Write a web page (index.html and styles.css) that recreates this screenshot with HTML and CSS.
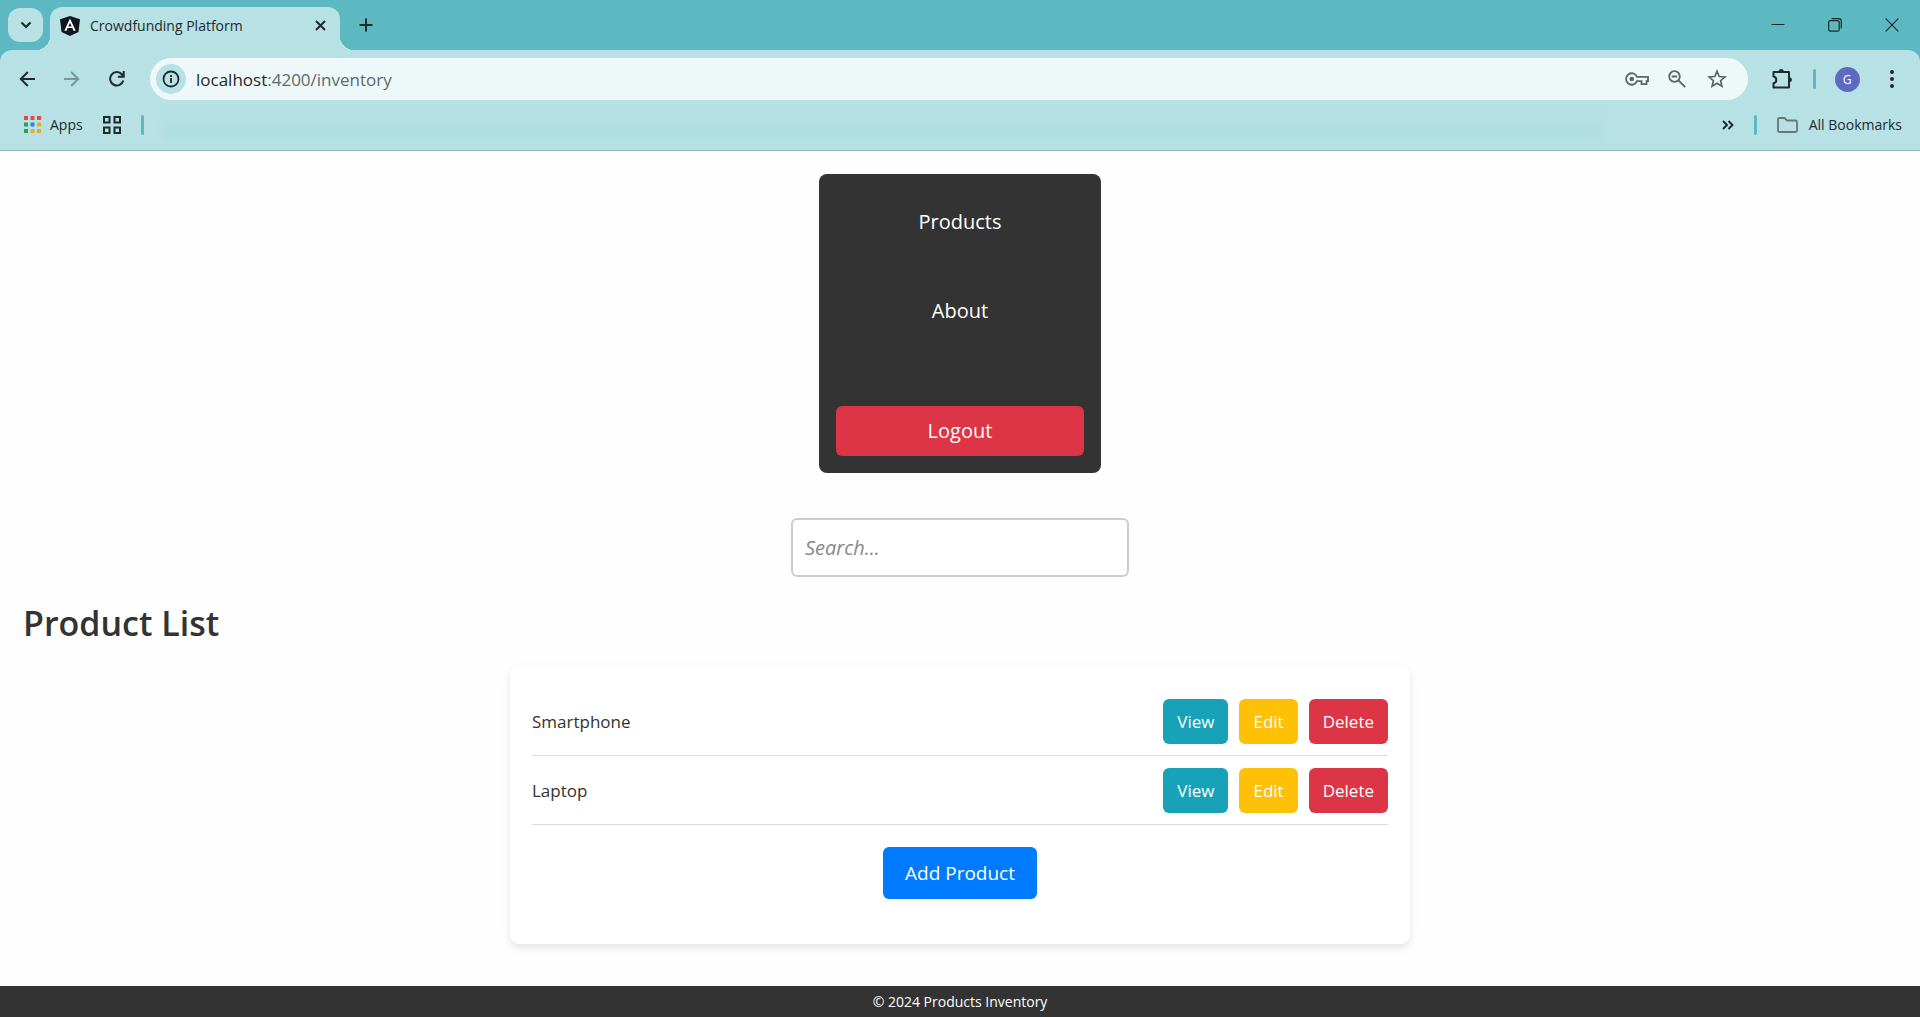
FILE: index.html
```html
<!DOCTYPE html>
<html lang="en">
<head>
<meta charset="utf-8">
<title>Crowdfunding Platform</title>
<link rel="stylesheet" href="styles.css">
</head>
<body>
<div class="browser">
  <div class="tab-strip">
    <button class="tab-search" aria-label="Search tabs"><svg width="12" height="8" viewBox="0 0 12 8"><path d="M1.5 1.5 6 6l4.500-4.500" fill="none" stroke="currentColor" stroke-width="2.200"/></svg></button>
    <div class="tab">
      <svg width="20" height="20" viewBox="0 0 20 20"><path d="M10 0 20 3.300 18.500 16 10 20 1.500 16 0 3.300z" fill="#10151f"/><path d="M10 2.500 4.300 14.800h2.200l1.100-2.700h4.800l1.100 2.700h2.200zm0 4.200 1.700 3.700H8.300z" fill="#fff"/></svg>
      <span class="tab-title">Crowdfunding Platform</span>
      <button class="tab-close" aria-label="Close tab"><svg width="11" height="11" viewBox="0 0 11 11"><path d="m1 1 9 9m0-9-9 9" stroke="currentColor" stroke-width="2"/></svg></button>
    </div>
    <button class="new-tab" aria-label="New tab"><svg width="14" height="14" viewBox="0 0 14 14"><path d="M7 .5v13M.5 7h13" stroke="currentColor" stroke-width="2"/></svg></button>
    <div class="window-controls">
      <button aria-label="Minimize"><svg width="14" height="14" viewBox="0 0 14 14"><path d="M.5 6.500h13" stroke="currentColor"/></svg></button>
      <button aria-label="Restore"><svg width="14" height="14" viewBox="0 0 14 14" fill="none" stroke="currentColor" stroke-width="1.200"><rect x=".7" y="2.700" width="10.500" height="10.500" rx="1.500"/><path d="M3.500.7h7.200a2.600 2.600 0 0 1 2.600 2.600v7.200"/></svg></button>
      <button aria-label="Close"><svg width="14" height="14" viewBox="0 0 14 14"><path d="m.7.7 12.600 12.600m0-12.600L.7 13.300" stroke="currentColor" stroke-width="1.200"/></svg></button>
    </div>
  </div>
  <div class="toolbar">
    <div class="nav-buttons">
      <button class="icon-button" aria-label="Back"><svg width="16" height="16" viewBox="0 0 16 16"><path d="M16 8H2m6.800-7L1.800 8l7 7" fill="none" stroke="currentColor" stroke-width="2"/></svg></button>
      <button class="icon-button muted" aria-label="Forward"><svg width="16" height="16" viewBox="0 0 16 16"><path d="M0 8h14M7.200 1l7 7-7 7" fill="none" stroke="currentColor" stroke-width="2"/></svg></button>
      <button class="icon-button" aria-label="Reload"><svg width="16" height="16" viewBox="0 0 16 16"><path d="M14.300 9.500A6.700 6.700 0 1 1 13 3.500l1.500 1.700M14.700 0v5.800H8.900" fill="none" stroke="currentColor" stroke-width="2"/></svg></button>
    </div>
    <div class="omnibox">
      <button class="site-info" aria-label="Site information"><svg width="18" height="18" viewBox="0 0 18 18"><circle cx="9" cy="9" r="7.500" fill="none" stroke="currentColor" stroke-width="1.800"/><path d="M9 8v5M9 5v2" stroke="currentColor" stroke-width="1.800"/></svg></button>
      <span class="url"><span class="host">localhost</span>:4200/inventory</span>
      <div class="omnibox-actions">
        <button aria-label="Passwords"><svg width="24" height="16" viewBox="0 0 24 16" fill="none" stroke="currentColor" stroke-width="1.800"><path d="M12 5.800A5.700 5.700 0 1 0 12 10.200h4.500v3h5v-3H23V5.800z"/><circle cx="6.800" cy="8" r="2.300" fill="currentColor" stroke="none"/></svg></button>
        <button aria-label="Zoom"><svg width="18" height="18" viewBox="0 0 18 18" fill="none" stroke="currentColor" stroke-width="1.800"><circle cx="6.500" cy="6.500" r="5.300"/><path d="m10.400 10.400 6.800 6.800M3.800 6.500h5.400"/></svg></button>
        <button aria-label="Bookmark this tab"><svg width="20" height="20" viewBox="0 0 20 20"><path d="m10 2.300 2.200 5.200 5.700.5-4.300 3.700 1.300 5.600L10 14.300l-4.900 3 1.300-5.600L2.100 8l5.700-.5z" fill="none" stroke="currentColor" stroke-width="1.700"/></svg></button>
      </div>
    </div>
    <div class="toolbar-actions">
      <button class="icon-button" aria-label="Extensions"><svg width="22" height="22" viewBox="0 0 22 22"><path d="M2.500 4h15.500v15.500H2.500v-4.300c3.700-.6 3.700-6 0-6.600z" fill="none" stroke="currentColor" stroke-width="2" stroke-linejoin="round"/><path d="M7.700 3.500a2.500 2.500 0 0 1 5 0M18.500 9.200a2.500 2.500 0 0 1 0 5" fill="currentColor"/></svg></button>
      <span class="divider"></span>
      <button class="icon-button" aria-label="Profile"><span class="avatar">G</span></button>
      <button class="icon-button menu-button" aria-label="Menu"><svg width="4" height="18" viewBox="0 0 4 18" fill="currentColor"><circle cx="2" cy="2" r="2"/><circle cx="2" cy="9" r="2"/><circle cx="2" cy="16" r="2"/></svg></button>
    </div>
  </div>
  <div class="bookmarks-bar">
    <button class="bookmark"><svg width="17" height="17" viewBox="0 0 17 17"><path d="M0 0h4v4H0zM6.500 0h4v4h-4zM13 0h4v4h-4z" fill="#e34b42"/><path d="M0 6.500h4v4H0zM0 13h4v4H0z" fill="#2e9e56"/><path d="M6.500 6.500h4v4h-4z" fill="#2186e8"/><path d="M13 6.500h4v4h-4zM6.500 13h4v4h-4zM13 13h4v4h-4z" fill="#e7ab2b"/></svg>Apps</button>
    <button class="bookmark" aria-label="Tab groups"><svg width="18" height="18" viewBox="0 0 18 18" fill="none" stroke="currentColor" stroke-width="2"><path d="M1 1h5.500v5.500H1zM11.500 1H17v5.500h-5.500zM1 11.500h5.500V17H1zM11.500 11.500H17V17h-5.500z"/></svg></button>
    <span class="divider"></span>
    <div class="bookmark-haze"></div>
    <button class="bookmark" aria-label="More bookmarks"><svg width="12" height="10" viewBox="0 0 12 10"><path d="m1 1 4 4-4 4m5.500-8 4 4-4 4" fill="none" stroke="currentColor" stroke-width="1.900"/></svg></button>
    <span class="divider"></span>
    <button class="bookmark"><svg class="folder" width="21" height="16" viewBox="0 0 21 16"><path d="M1 2.500Q1 1 2.500 1h5l2.500 2.500h8.500Q20 3.500 20 5v8.500q0 1.500-1.500 1.500h-16Q1 15 1 13.500z" fill="none" stroke="currentColor" stroke-width="1.800"/></svg>All Bookmarks</button>
  </div>
</div>
<main>
  <nav class="menu">
    <a href="#products">Products</a>
    <a href="#about">About</a>
    <button class="logout">Logout</button>
  </nav>
  <input class="search" type="text" placeholder="Search..." aria-label="Search products">
  <h2>Product List</h2>
  <section class="card">
    <ul class="products">
      <li><span class="name">Smartphone</span><button class="view">View</button><button class="edit">Edit</button><button class="delete">Delete</button></li>
      <li><span class="name">Laptop</span><button class="view">View</button><button class="edit">Edit</button><button class="delete">Delete</button></li>
    </ul>
    <button class="add">Add Product</button>
  </section>
</main>
<footer>© 2024 Products Inventory</footer>
</body>
</html>
```
FILE: styles.css
```css
* {
  box-sizing: border-box;
}

body {
  margin: 0;
  min-height: 100vh;
  display: flex;
  flex-direction: column;
  background: #fefefe;
  color: #333;
  font-family: "Open Sans", "Noto Sans", sans-serif;
  font-size: 17px;
}

button {
  padding: 0;
  border: 0;
  background: none;
  color: inherit;
  font: inherit;
  cursor: pointer;
}

svg {
  display: block;
  flex: none;
}

/* Browser frame */
.browser {
  background: #5cb8c1;
  color: #1f2a2c;
  font-size: 14px;
}

.browser button {
  display: flex;
  align-items: center;
  justify-content: center;
}

.tab-strip {
  display: flex;
  align-items: center;
  height: 50px;
  padding-left: 8px;
}

.tab-search {
  width: 35px;
  height: 34px;
  border-radius: 12px;
  background: #b7e1e4;
}

.tab {
  position: relative;
  display: flex;
  align-items: center;
  align-self: flex-end;
  gap: 10px;
  width: 290px;
  height: 43px;
  margin-left: 7px;
  padding: 0 14px 6px 10px;
  border-radius: 12px 12px 0 0;
  background: #b7e1e4;
}

.tab::before,
.tab::after {
  content: "";
  position: absolute;
  bottom: 0;
  width: 14px;
  height: 14px;
}

.tab::before {
  right: 100%;
  background: radial-gradient(circle at 0 0, transparent 14px, #b7e1e4 14px);
}

.tab::after {
  left: 100%;
  background: radial-gradient(circle at 100% 0, transparent 14px, #b7e1e4 14px);
}

.tab-title {
  flex: 1;
}

.new-tab {
  width: 34px;
  height: 34px;
  margin-left: 9px;
}

.window-controls {
  display: flex;
  margin-left: auto;
}

.window-controls button {
  width: 57px;
  height: 50px;
}

.toolbar {
  display: flex;
  align-items: center;
  height: 58px;
  padding: 0 11px 0 10px;
  border-radius: 12px 12px 0 0;
  background: #b7e1e4;
}

.nav-buttons {
  display: flex;
  gap: 11px;
}

.icon-button {
  width: 34px;
  height: 34px;
}

.muted {
  opacity: 0.4;
}

.omnibox {
  display: flex;
  align-items: center;
  flex: 1;
  gap: 10px;
  height: 42px;
  margin: 0 17px 0 16px;
  padding: 0 11px 0 6px;
  border-radius: 21px;
  background: #eef8f9;
}

.site-info {
  width: 30px;
  height: 30px;
  border-radius: 50%;
  background: #b7e1e4;
}

.url {
  flex: 1;
  color: #60696b;
  font-size: 17px;
}

.host {
  color: #1f2a2c;
}

.omnibox-actions {
  display: flex;
  color: #5b6567;
}

.omnibox-actions button {
  width: 40px;
  height: 34px;
}

.toolbar-actions {
  display: flex;
  align-items: center;
  gap: 14px;
}

.menu-button {
  margin-left: -3px;
}

.divider {
  width: 3px;
  height: 20px;
  border-radius: 2px;
  background: #5cb8c1;
}

.avatar {
  width: 25px;
  border-radius: 50%;
  background: #5c6bc0;
  color: #fff;
  font-size: 12px;
  line-height: 25px;
}

.bookmarks-bar {
  display: flex;
  align-items: center;
  gap: 20px;
  height: 43px;
  padding: 0 18px 9px 24px;
  border-bottom: 1px solid #9bb5b7;
  background: #b7e1e4;
}

.bookmark {
  gap: 9px;
}

.folder {
  margin-right: 2px;
  color: #687678;
}

.bookmark-haze {
  flex: 1;
  height: 26px;
  margin-right: 100px;
  background: linear-gradient(#b7e1e4, #abdee2);
  filter: blur(3px);
}

/* Page */
main {
  display: flex;
  flex-direction: column;
  align-items: center;
  flex: 1;
  padding: 23px;
}

.menu {
  display: flex;
  flex-direction: column;
  width: 282px;
  padding: 17px;
  border-radius: 8px;
  background: #333;
  color: #fff;
  font-size: 20px;
  line-height: 28px;
  text-align: center;
}

.menu a {
  margin-bottom: 27px;
  padding: 17px;
  color: inherit;
  text-decoration: none;
}

.logout {
  height: 50px;
  margin-top: 37px;
  border-radius: 6px;
  background: #dc3545;
}

.search {
  width: 338px;
  height: 59px;
  margin-top: 45px;
  padding: 0 12px;
  border: 2px solid #ccc;
  border-radius: 6px;
  background: #fff;
  font: italic 20px "Open Sans", "Noto Sans", sans-serif;
}

.search::placeholder {
  color: #888;
}

h2 {
  align-self: flex-start;
  margin: 24px 0 20px;
  font-size: 34px;
  font-weight: 600;
  line-height: 44px;
}

.card {
  display: flex;
  flex-direction: column;
  align-items: center;
  width: 100%;
  max-width: 900px;
  padding: 22px 22px 45px;
  border-radius: 9px;
  background: #fff;
  box-shadow: 0 4px 9px rgba(0, 0, 0, 0.1);
}

.products {
  width: 100%;
  margin: 0 0 22px;
  padding: 0;
  list-style: none;
}

.products li {
  display: flex;
  align-items: center;
  gap: 11px;
  height: 69px;
  border-bottom: 1px solid #ddd;
}

.name {
  flex: 1;
}

.products button {
  height: 45px;
  padding: 0 14px;
  border-radius: 6px;
  color: #fff;
}

.products .view {
  background: #17a2b8;
}

.products .edit {
  background: #ffc107;
}

.products .delete {
  background: #dc3545;
}

.add {
  height: 52px;
  padding: 0 22px;
  border-radius: 6px;
  background: #007bff;
  color: #fff;
  font-size: 19px;
}

footer {
  background: #333;
  color: #fff;
  font-size: 14px;
  line-height: 31px;
  text-align: center;
}
```
